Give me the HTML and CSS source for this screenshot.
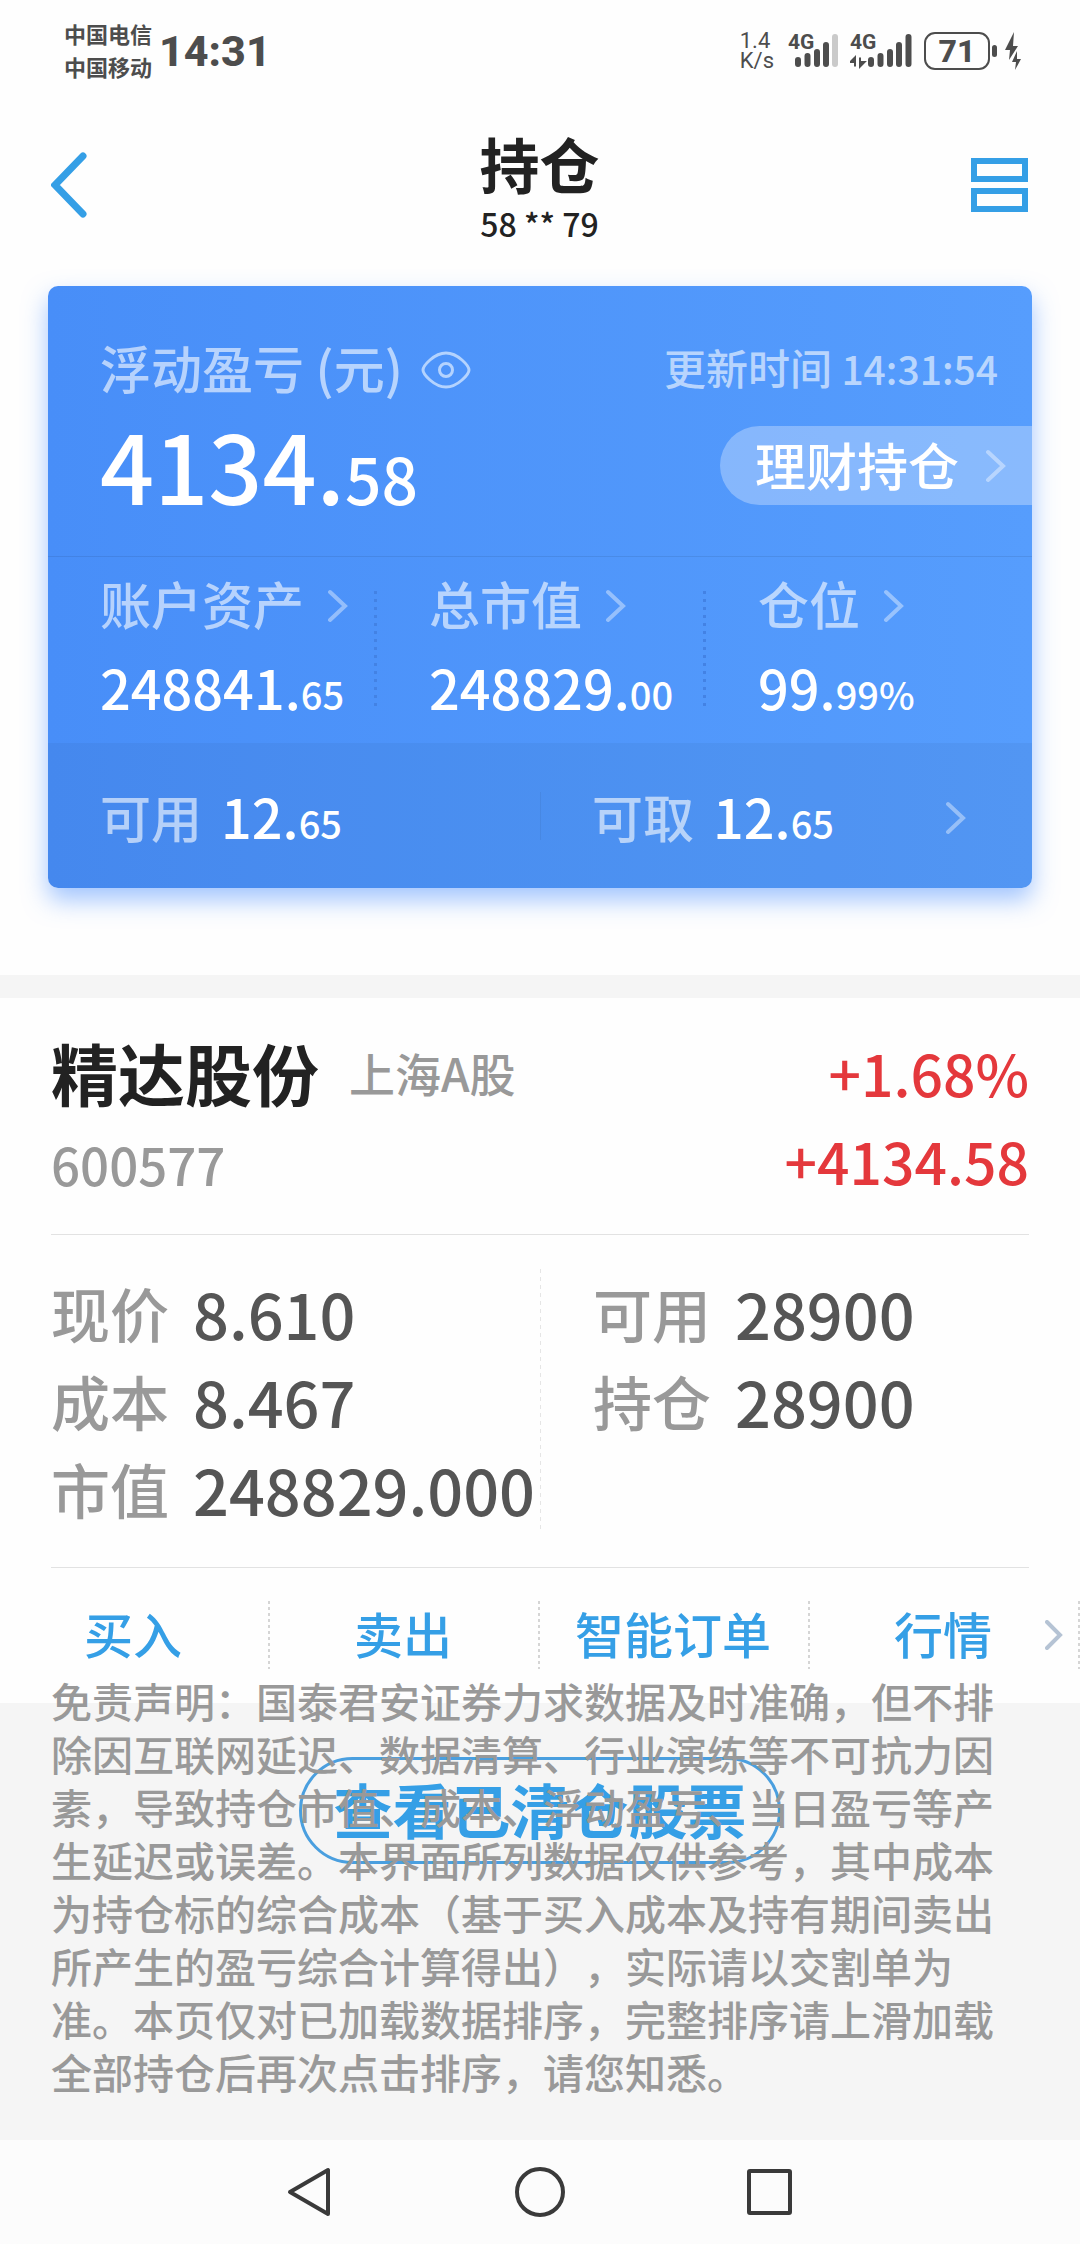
FILE: index.html
```html
<!DOCTYPE html>
<html lang="zh-CN">
<head>
  <meta charset="UTF-8">
  <meta name="viewport" content="width=device-width, initial-scale=1.0">
  <title>持仓</title>
  <link rel="stylesheet" href="styles.css">
</head>
<body>
  <!-- Status bar -->
  <div class="status-bar">
    <div class="carriers">
      <div>中国电信</div>
      <div>中国移动</div>
    </div>
    <div class="clock">14:31</div>
    <div class="status-right">
      <div class="net-speed">
        <div>1.4</div>
        <div>K/s</div>
      </div>
      <div class="signal">
        <span>4G</span>
        <svg width="50" height="36" viewBox="0 0 50 36">
          <g stroke="#4d4d4d" stroke-width="6" stroke-linecap="round">
            <path d="M10 27v4M19.500 23v8M29 19v12M38 12v19"/>
            <path d="M47 4v27" stroke="#cacaca"/>
          </g>
        </svg>
      </div>
      <div class="signal">
        <span>4G</span>
        <svg width="62" height="36" viewBox="0 0 62 36">
          <g stroke="#4d4d4d" stroke-width="6" stroke-linecap="round">
            <path d="M21 27v4M30.500 23v8M40 19v12M49 12v19M58.500 4v27"/>
          </g>
          <path d="M5 33.500V24.500l-4.500 4.500H4M10 24.500v9l4.500-4.500H11" fill="#4d4d4d" stroke="#4d4d4d" stroke-width="2"/>
        </svg>
      </div>
      <div class="battery">71</div>
      <svg class="bolt" width="16" height="38" viewBox="0 0 16 38">
        <path d="M9 0L0 18h5L4 28l9-14H8zM12 19l-5 11h4l-1 8 6-11h-4z" fill="#4d4d4d"/>
      </svg>
    </div>
  </div>

  <!-- Title bar -->
  <header class="title-bar">
    <button type="button" class="icon-btn" aria-label="返回">
      <svg width="36" height="66" viewBox="0 0 36 66">
        <path d="M32 4L4 33l28 29" fill="none" stroke="#359fe6" stroke-width="7" stroke-linecap="round"/>
      </svg>
    </button>
    <div class="title">
      <h1>持仓</h1>
      <p>58 ** 79</p>
    </div>
    <button type="button" class="icon-btn" aria-label="切换账户">
      <svg width="57" height="54" viewBox="0 0 57 54">
        <path d="M3 3h51v18H3zM3 33h51v18H3z" fill="none" stroke="#359fe6" stroke-width="6"/>
      </svg>
    </button>
  </header>

  <!-- Account summary -->
  <section class="summary">
    <div class="card">
      <div class="profit">
        <div>
          <div class="label">浮动盈亏 (元)
            <button type="button" class="icon-btn" aria-label="隐藏金额">
              <svg width="50" height="38" viewBox="0 0 50 38">
                <g fill="none" stroke="#b4d3fe" stroke-width="3">
                  <path d="M2 19C2 15 13 2 25 2s23 13 23 17-11 17-23 17S2 23 2 19z"/>
                  <circle cx="25" cy="19" r="6.500"/>
                </g>
              </svg>
            </button>
          </div>
          <div class="total">4134.<small>58</small></div>
        </div>
        <div class="profit-right">
          <div class="updated">更新时间 <time>14:31:54</time></div>
          <button type="button" class="pill">理财持仓
            <svg class="chevron" width="20" height="34" viewBox="0 0 20 34"><path d="M2 3l15 14L2 31"/></svg>
          </button>
        </div>
      </div>
      <div class="assets">
        <div class="asset">
          <div class="label">账户资产 <svg class="chevron" width="20" height="34" viewBox="0 0 20 34"><path d="M2 3l15 14L2 31"/></svg></div>
          <div class="amount">248841.<small>65</small></div>
        </div>
        <div class="dots"></div>
        <div class="asset">
          <div class="label">总市值 <svg class="chevron" width="20" height="34" viewBox="0 0 20 34"><path d="M2 3l15 14L2 31"/></svg></div>
          <div class="amount">248829.<small>00</small></div>
        </div>
        <div class="dots"></div>
        <div class="asset">
          <div class="label">仓位 <svg class="chevron" width="20" height="34" viewBox="0 0 20 34"><path d="M2 3l15 14L2 31"/></svg></div>
          <div class="amount">99.<small>99%</small></div>
        </div>
      </div>
      <div class="cash">
        <div class="cash-item">
          <span class="label">可用</span>
          <span class="amount">12.<small>65</small></span>
        </div>
        <div class="cash-item">
          <span class="label">可取</span>
          <span class="amount">12.<small>65</small></span>
          <svg class="chevron" width="20" height="34" viewBox="0 0 20 34"><path d="M2 3l15 14L2 31"/></svg>
        </div>
      </div>
    </div>
  </section>

  <!-- Holding -->
  <section class="stock">
    <div class="stock-head">
      <div>
        <div class="stock-name">
          <h2>精达股份</h2>
          <span>上海A股</span>
        </div>
        <div class="code">600577</div>
      </div>
      <div class="change">
        <div>+1.68%</div>
        <div>+4134.58</div>
      </div>
    </div>
    <div class="stock-info">
      <dl>
        <div><dt>现价</dt><dd>8.610</dd></div>
        <div><dt>成本</dt><dd>8.467</dd></div>
        <div><dt>市值</dt><dd>248829.000</dd></div>
      </dl>
      <dl>
        <div><dt>可用</dt><dd>28900</dd></div>
        <div><dt>持仓</dt><dd>28900</dd></div>
      </dl>
    </div>
    <div class="actions">
      <button type="button">买入</button>
      <button type="button">卖出</button>
      <button type="button">智能订单</button>
      <button type="button">行情</button>
      <svg class="more" width="18" height="30" viewBox="0 0 18 30"><path d="M2 2l13 13L2 28"/></svg>
    </div>
  </section>

  <!-- Cleared stocks and disclaimer -->
  <section class="bottom">
    <button type="button" class="cleared">查看已清仓股票</button>
    <p class="disclaimer">免责声明：国泰君安证券力求数据及时准确，但不排除因互联网延迟、数据清算、行业演练等不可抗力因素，导致持仓市值、成本、浮动盈亏、当日盈亏等产生延迟或误差。本界面所列数据仅供参考，其中成本为持仓标的综合成本（基于买入成本及持有期间卖出所产生的盈亏综合计算得出），实际请以交割单为准。本页仅对已加载数据排序，完整排序请上滑加载全部持仓后再次点击排序，请您知悉。</p>
  </section>

  <nav class="nav-bar">
    <button type="button" class="icon-btn" aria-label="后退">
      <svg width="50" height="52" viewBox="0 0 50 52">
        <path d="M42 4v44L4 26z" fill="none" stroke="#3a3a3a" stroke-width="4" stroke-linejoin="round"/>
      </svg>
    </button>
    <button type="button" class="icon-btn" aria-label="主页">
      <svg width="50" height="52" viewBox="0 0 50 52">
        <circle cx="25" cy="26" r="23" fill="none" stroke="#3a3a3a" stroke-width="4"/>
      </svg>
    </button>
    <button type="button" class="icon-btn" aria-label="最近任务">
      <svg width="50" height="52" viewBox="0 0 50 52">
        <rect x="5" y="5" width="41" height="42" rx="1" fill="none" stroke="#3a3a3a" stroke-width="4"/>
      </svg>
    </button>
  </nav>
</body>
</html>
```

FILE: styles.css
```css
* {
  box-sizing: border-box;
}

body {
  display: flex;
  flex-direction: column;
  min-height: 100vh;
  margin: 0;
  background: #fefefe;
  color: #222;
  font-family: "Noto Sans CJK SC", sans-serif;
  font-weight: 500;
}

h1,
h2,
p,
dl,
dd {
  margin: 0;
}

button {
  padding: 0;
  border: none;
  background: none;
  color: inherit;
  font: inherit;
  cursor: pointer;
}

svg {
  display: block;
}

small {
  line-height: 1;
}

.icon-btn {
  display: flex;
  align-items: center;
  justify-content: center;
}

/* status bar */
.status-bar {
  display: flex;
  align-items: center;
  height: 102px;
  padding: 0 59px 0 64px;
  color: #4d4d4d;
}

.carriers {
  margin-right: 7px;
  padding-bottom: 3px;
  font-size: 22px;
  font-weight: 700;
  line-height: 33px;
}

.clock {
  font-family: Roboto, sans-serif;
  font-size: 43px;
  font-weight: 800;
  line-height: 48px;
}

.status-right {
  display: flex;
  align-items: center;
  margin-left: auto;
}

.net-speed {
  margin-right: 14px;
  font-family: Roboto, sans-serif;
  font-size: 22px;
  font-weight: 400;
  line-height: 20px;
}

.signal {
  position: relative;
  margin-right: 12px;

  span {
    position: absolute;
    top: 0;
    left: 0;
    font-family: Roboto, sans-serif;
    font-size: 21px;
    font-weight: 700;
    line-height: 18px;
  }
}

.battery {
  position: relative;
  width: 66px;
  height: 38px;
  border: 2px solid #4d4d4d;
  border-radius: 11px;
  font-family: Roboto, sans-serif;
  font-size: 32px;
  font-weight: 800;
  line-height: 35px;
  text-align: center;

  &::after {
    content: "";
    position: absolute;
    top: 11px;
    right: -9px;
    width: 5px;
    height: 12px;
    border-radius: 3px;
    background: #4d4d4d;
  }
}

.bolt {
  margin-left: 15px;
}

/* title bar */
.title-bar {
  display: flex;
  align-items: center;
  justify-content: space-between;
  height: 166px;
  padding: 0 52px 0 51px;

  .icon-btn {
    width: 57px;
    justify-content: flex-start;
  }
}

.title {
  padding-top: 4px;
  text-align: center;

  h1 {
    font-size: 60px;
    font-weight: 700;
    line-height: 72px;
  }

  p {
    font-size: 32px;
    line-height: 48px;
  }
}

/* summary card */
.summary {
  padding: 18px 48px 87px;
}

.card {
  border-radius: 10px;
  background: linear-gradient(90deg, #488ef8, #569dfd);
  box-shadow: 0 12px 24px rgba(72, 142, 255, 0.5);
  color: #fff;
  overflow: hidden;
}

.label {
  display: flex;
  align-items: center;
  gap: 24px;
  color: rgba(255, 255, 255, 0.6);
  font-size: 51px;
  line-height: 60px;

  svg {
    margin-top: 6px;
  }
}

.chevron {
  fill: none;
  stroke: rgba(255, 255, 255, 0.4);
  stroke-width: 4;
  stroke-linecap: round;
}

.profit {
  display: flex;
  justify-content: space-between;
  height: 271px;
  padding: 51px 0 0 52px;
  border-bottom: 1px solid rgba(0, 0, 0, 0.08);

  .label {
    gap: 18px;
  }
}

.total {
  margin-top: 17px;
  font-size: 95px;
  line-height: 100px;

  small {
    font-size: 64px;
  }
}

.profit-right {
  display: flex;
  flex-direction: column;
  align-items: flex-end;
}

.updated {
  padding-right: 34px;
  color: rgba(255, 255, 255, 0.6);
  font-size: 42px;
  line-height: 60px;

  time {
    font-size: 39px;
  }
}

.pill {
  display: flex;
  align-items: center;
  gap: 27px;
  height: 79px;
  margin-top: 28px;
  padding: 0 26px 4px 35px;
  border-radius: 40px 0 0 40px;
  background: rgba(255, 255, 255, 0.3);
  font-size: 51px;

  .chevron {
    margin-top: 4px;
  }
}

.assets {
  display: flex;
  height: 186px;
  padding-top: 16px;
}

.asset {
  flex: 1;
  padding-left: 52px;
}

.dots {
  width: 3px;
  height: 116px;
  margin-top: 18px;
  background: repeating-linear-gradient(#4382e4 0 3px, transparent 3px 8px);
}

.amount {
  font-size: 54px;
  line-height: 60px;

  small {
    font-size: 38px;
  }
}

.asset .amount {
  margin-top: 24px;
}

.cash {
  display: flex;
  height: 145px;
  background: rgba(0, 0, 0, 0.04);
}

.cash-item {
  display: flex;
  flex: 1;
  align-items: center;
  gap: 19px;
  padding: 0 66px 0 52px;

  .chevron {
    margin-top: 4px;
    margin-left: auto;
  }
}

.cash-item + .cash-item {
  background: linear-gradient(rgba(0, 0, 0, 0.06), rgba(0, 0, 0, 0.06)) left / 1px 48px no-repeat;
}

/* stock */
.stock {
  border-top: 23px solid #f5f5f5;
}

.stock-head {
  display: flex;
  justify-content: space-between;
  height: 237px;
  margin: 0 51px;
  padding-top: 30px;
  border-bottom: 1px solid #e2e2e2;
}

.stock-name {
  display: flex;
  align-items: center;
  gap: 30px;

  h2 {
    font-size: 67px;
    font-weight: 700;
    line-height: 88px;
  }

  span {
    color: #999;
    font-size: 46px;
  }
}

.code {
  color: #999;
  font-size: 51px;
  line-height: 96px;
}

.change {
  color: #e4383c;
  font-size: 57px;
  line-height: 88px;
  text-align: right;
}

.stock-info {
  display: grid;
  grid-template-columns: minmax(0, 1fr) minmax(0, 1fr);
  height: 333px;
  margin: 0 51px;
  padding-top: 34px;
  border-bottom: 1px solid #e2e2e2;

  dl {
    height: 260px;
  }

  dl + dl {
    padding-left: 53px;
    background: repeating-linear-gradient(#e5e5e5 0 4px, transparent 4px 8px) left / 1px 100% no-repeat;
  }

  dl div {
    display: flex;
    gap: 24px;
    line-height: 88px;
    white-space: nowrap;
  }

  dt {
    color: #999;
    font-size: 59px;
  }

  dd {
    color: #555;
    font-size: 63px;
  }
}

.actions {
  position: relative;
  display: flex;
  height: 135px;
  padding-top: 33px;

  button {
    flex: 1;
    height: 68px;
    padding: 0 4px 4px 0;
    background: repeating-linear-gradient(#d5d5d5 0 3px, transparent 3px 6px) right / 2px 100% no-repeat;
    color: #359fe6;
    font-size: 49px;
    line-height: 60px;
  }

  .more {
    position: absolute;
    top: 52px;
    right: 17px;
    fill: none;
    stroke: #b5c3d4;
    stroke-width: 4;
    stroke-linecap: round;
  }
}

/* bottom */
.bottom {
  position: relative;
  flex: 1;
  padding: 54px 51px;
  background: #f5f5f5;
}

.cleared {
  display: block;
  height: 107px;
  margin: 0 auto;
  padding: 0 31px 5px;
  border: 3px solid #4a9fdf;
  border-radius: 54px;
  color: #359fe6;
  font-size: 59px;
  font-weight: 700;
}

.disclaimer {
  position: absolute;
  right: 51px;
  bottom: 42px;
  left: 51px;
  color: #999;
  font-size: 41px;
  line-height: 53px;
  text-spacing-trim: space-all;
}

.nav-bar {
  display: flex;
  align-items: center;
  justify-content: center;
  gap: 179px;
  height: 104px;
  background: #fcfcfc;
}
```
